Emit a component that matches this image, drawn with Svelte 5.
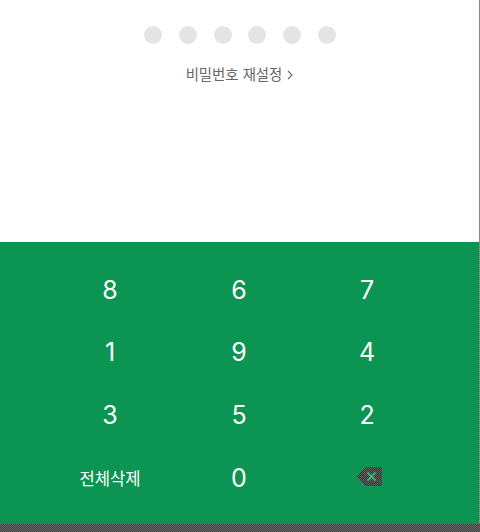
<script lang="ts">
	const keys = ['8', '6', '7', '1', '9', '4', '3', '5', '2'];
	const dots = [0, 1, 2, 3, 4, 5];
</script>

<div class="screen">
	<div class="body">
		<div class="main">
			<section class="top">
				<div class="dots">
					{#each dots as d (d)}
						<span class="dot"></span>
					{/each}
				</div>
				<a class="reset" href="#reset">
					비밀번호 재설정
					<svg width="6" height="10" viewBox="0 0 6 10" aria-hidden="true">
						<path d="M1 1l4 4-4 4" fill="none" stroke="#666" stroke-width="1.1" />
					</svg>
				</a>
			</section>
			<section class="pad">
				{#each keys as key (key)}
					<button class="key">{key}</button>
				{/each}
				<button class="key clear">전체삭제</button>
				<button class="key">0</button>
				<button class="key" aria-label="지우기">
					<svg width="30" height="25" viewBox="0 0 30 25" aria-hidden="true">
						<defs>
							<pattern id="dither" width="2" height="2" patternUnits="userSpaceOnUse">
								<rect width="2" height="2" fill="#5c5c5c" />
								<rect width="1" height="1" fill="#383838" />
								<rect x="1" y="1" width="1" height="1" fill="#383838" />
							</pattern>
						</defs>
						<path
							d="M5 11.5L13 2h14a3 3 0 0 1 3 3v13a3 3 0 0 1-3 3H13z"
							fill="url(#dither)"
							shape-rendering="crispEdges"
						/>
						<path d="M15.5 7.5l8 8M23.5 7.5l-8 8" stroke="#3fb274" stroke-width="2" fill="none" />
					</svg>
				</button>
			</section>
		</div>
		<div class="side"></div>
	</div>
	<div class="strip"></div>
</div>

<style>
	:global(body) {
		margin: 0;
		background: #555;
	}

	.screen {
		width: 480px;
		height: 532px;
		display: flex;
		flex-direction: column;
		overflow: hidden;
		font-family: 'Inter', 'Noto Sans CJK KR', sans-serif;
	}

	.body {
		height: 524px;
		display: flex;
	}

	.main {
		width: 479px;
		display: flex;
		flex-direction: column;
	}

	.side {
		flex: 1;
		background: repeating-conic-gradient(#777 0 25%, #999 0 50%) 0 0 / 2px 2px;
	}

	.top {
		height: 242px;
		background: #fff;
		display: flex;
		flex-direction: column;
		align-items: center;
		padding-top: 26px;
		box-sizing: border-box;
	}

	.dots {
		display: flex;
		gap: 16.8px;
		padding-left: 1px;
	}

	.dot {
		width: 18px;
		height: 18px;
		border-radius: 50%;
		background: #e4e4e4;
	}

	.reset {
		margin-top: 21px;
		display: flex;
		align-items: center;
		gap: 5px;
		font-size: 14.4px;
		line-height: 20px;
		color: #666;
		text-decoration: none;
	}

	.pad {
		flex: 1;
		background: #0b9452;
		display: grid;
		grid-template-columns: 128px 130px 126px;
		grid-template-rows: 62px 62px 63px 63px;
		padding: 17px 0 0 46px;
		box-sizing: border-box;
	}

	.key {
		border: 0;
		background: none;
		padding: 0;
		display: flex;
		align-items: center;
		justify-content: center;
		color: #fff;
		font-family: inherit;
		font-size: 25px;
	}

	.clear {
		font-size: 16.6px;
	}

	.strip {
		flex: 1;
		background: repeating-conic-gradient(#444 0 25%, #666 0 50%) 0 0 / 2px 2px;
	}
</style>
